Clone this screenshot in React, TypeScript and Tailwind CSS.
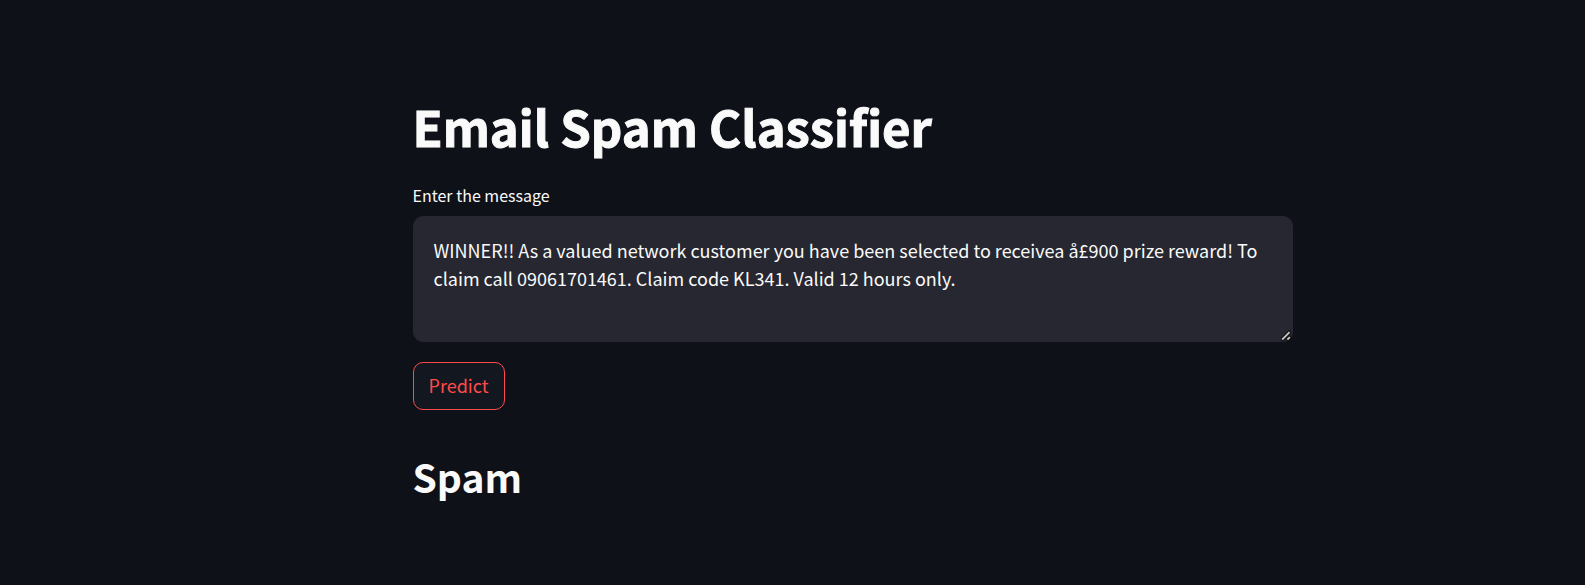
import { useState } from "react";

const SAMPLE =
  "WINNER!! As a valued network customer you have been selected to receivea å£900 prize reward! To claim call 09061701461. Claim code KL341. Valid 12 hours only.";

function ResizeGrip() {
  return (
    <svg
      aria-hidden="true"
      viewBox="0 0 12 12"
      className="pointer-events-none absolute right-0 bottom-0 size-3"
    >
      <g fill="none" strokeLinecap="square">
        <path d="M1.8 8.8 7.8 2.8M7 9 8.2 7.8" stroke="#101013" strokeWidth="4" />
        <path d="M1.8 8.8 7.8 2.8M7 9 8.2 7.8" stroke="#c4c4c4" strokeWidth="1.9" />
      </g>
    </svg>
  );
}

export default function App() {
  const [message, setMessage] = useState(SAMPLE);

  return (
    <main className="min-h-screen bg-[#0e1117] px-6 pt-24 pb-16 font-['Noto_Sans_CJK_JP','Noto_Sans',sans-serif] text-[#fafafa] lg:pr-0 lg:pl-30">
      <div className="mx-auto flex max-w-[880px] flex-col items-start">
        <h1 className="text-[49px] leading-[60px] font-bold [-webkit-text-stroke:1px_#fafafa]">
          Email Spam Classifier
        </h1>
        <label htmlFor="message" className="mt-[27px] text-base leading-6">
          Enter the message
        </label>
        <div className="relative mt-[9px] w-full">
          <textarea
            id="message"
            value={message}
            onChange={(event) => setMessage(event.target.value)}
            spellCheck={false}
            className="block h-[126px] w-full resize-y rounded-[10px] border border-[#262730] bg-[#262730] px-5 py-[19px] text-lg leading-7 scheme-dark outline-none [&::-webkit-resizer]:bg-transparent"
          />
          <ResizeGrip />
        </div>
        <button
          type="button"
          className="mt-5 h-12 rounded-[10px] border border-[#ff4b4b] bg-[#13171f] px-[15px] pb-0.5 text-lg leading-7 text-[#ff4b4b]"
        >
          Predict
        </button>
        <h2 className="mt-10 text-[39px] leading-[52px] font-semibold">Spam</h2>
      </div>
    </main>
  );
}
